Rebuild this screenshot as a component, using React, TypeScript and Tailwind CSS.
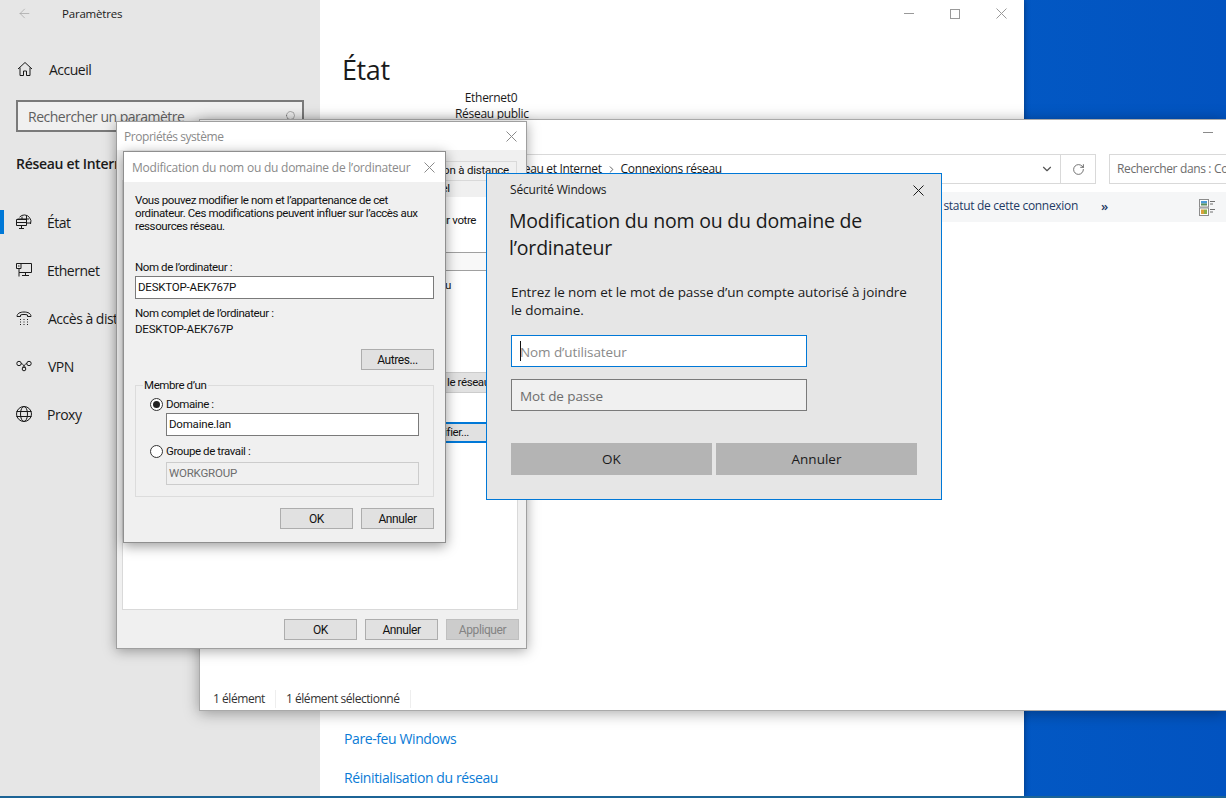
import React from "react";
import { ArrowLeft, ChevronDown, ChevronRight, RotateCw, Search } from "lucide-react";

const HomeIcon = () => (
  <svg width="16" height="16" viewBox="0 0 16 16" fill="none" stroke="#1a1a1a" strokeWidth="1">
    <path d="M1 8 8 1.5 15 8M3 6.5v8h3.5V10h3v4.5H13v-8" />
  </svg>
);

const StatusIcon = () => (
  <svg width="16" height="16" viewBox="0 0 16 16" fill="none" stroke="#1a1a1a" strokeWidth="1">
    <path d="M3.5 3.2a6.4 6.4 0 0 1 10 .3 6.4 6.4 0 0 1 1 6.5" />
    <path d="M6 5V2.6M10.5 10V1.8M13 5H1.5M15 9h-4" />
    <path d="M.5 5.5h10v6H.5zM.5 8.5h10M5.5 11.5v3M3 14.5h5" />
  </svg>
);

const EthernetIcon = () => (
  <svg width="16" height="16" viewBox="0 0 16 16" fill="none" stroke="#1a1a1a" strokeWidth="1">
    <path d="M5 1.5h10.5v9H3v-4M.5 1.5H5v5H.5zM2 4h1.5M3 10.500v4M9.5 10.5v3M6 13.5h7" />
  </svg>
);

const DialupIcon = () => (
  <svg width="16" height="16" viewBox="0 0 16 16" fill="none" stroke="#1a1a1a" strokeWidth="1">
    <path d="M1 6.5C1 3.5 4 2 8 2s7 1.5 7 4.5h-3.5V5C10 4.3 6 4.3 4.500 5v1.500z" />
    <path d="M4 9.5h1M7.500 9.500h1M11 9.5h1M4 12h1M7.500 12h1M11 12h1M4 14.500h1M7.500 14.500h1M11 14.500h1" />
  </svg>
);

const VpnIcon = () => (
  <svg width="16" height="16" viewBox="0 0 16 16" fill="none" stroke="#1a1a1a" strokeWidth="1">
    <circle cx="3" cy="5.500" r="2.200" />
    <circle cx="13" cy="5.500" r="2.200" />
    <circle cx="8" cy="11" r="1.800" />
    <path d="M5 5.500C7 6 8.500 8 9.500 9.700M11 5.500C9 6 7.500 8 6.500 9.700" />
  </svg>
);

const ProxyIcon = () => (
  <svg width="16" height="16" viewBox="0 0 16 16" fill="none" stroke="#1a1a1a" strokeWidth="1">
    <circle cx="8" cy="8" r="7.500" />
    <ellipse cx="8" cy="8" rx="3.500" ry="7.500" />
    <path d="M.5 5.500h15M.5 10.500h15" />
  </svg>
);

const ViewIcon = () => (
  <svg width="16" height="17" viewBox="0 0 16 17">
    <rect x=".5" y=".5" width="9" height="7.500" fill="#fff" stroke="#8c8c8c" />
    <rect x="2" y="2" width="6" height="2.500" fill="#4d9bd8" />
    <rect x="2" y="4.500" width="6" height="2" fill="#5a8f5c" />
    <rect x=".5" y="9" width="9" height="7.500" fill="#fff" stroke="#8c8c8c" />
    <rect x="2" y="10.500" width="3" height="4.500" fill="#d8a13c" />
    <rect x="5" y="10.500" width="3" height="4.500" fill="#8bb04a" />
    <path d="M11 2.500h5M11 5h3M11 10.500h5M11 13h3" stroke="#6f6f6f" />
  </svg>
);

const CloseIcon = ({ color = "#8a8a8a" }: { color?: string }) => (
  <svg width="11" height="11" viewBox="0 0 11 11" fill="none" stroke={color} strokeWidth="1">
    <path d="M.5.5l10 10M10.500.5l-10 10" />
  </svg>
);

const navItems = [
  { label: "État", icon: StatusIcon, gap: "pl-[15px]", active: true },
  { label: "Ethernet", icon: EthernetIcon, gap: "pl-[15px]", active: false },
  { label: "Accès à distance", icon: DialupIcon, gap: "pl-[16px]", active: false },
  { label: "VPN", icon: VpnIcon, gap: "pl-[16px]", active: false },
  { label: "Proxy", icon: ProxyIcon, gap: "pl-[15px]", active: false },
];

const Win32Button = ({ label, disabled }: { label: string; disabled?: boolean }) => (
  <button
    className={`h-[21px] w-[73px] border text-[12px] leading-none ${
      disabled ? "border-[#bfbfbf] bg-[#cccccc] text-[#838383]" : "border-[#adadad] bg-[#e1e1e1] text-[#111]"
    }`}
  >
    {label}
  </button>
);

const Field = ({ value, disabled }: { value: string; disabled?: boolean }) => (
  <div
    className={`flex h-[23px] items-center border px-[2px] tracking-[-0.2px] ${
      disabled ? "border-[#cccccc] bg-[#f0f0f0] text-[#6d6d6d]" : "border-[#7a7a7a] bg-white text-[#111]"
    }`}
  >
    {value}
  </div>
);

const Radio = ({ checked }: { checked?: boolean }) => (
  <span className="flex size-[13px] shrink-0 items-center justify-center rounded-full border border-[#333] bg-white">
    {checked && <span className="size-[7px] rounded-full bg-[#222]" />}
  </span>
);

const SettingsWindow = () => (
  <div className="absolute left-0 top-0 flex h-[796px] w-[1024px] bg-white shadow-[0_0_6px_rgba(0,0,0,0.4)]">
    <aside className="flex w-[320px] shrink-0 flex-col bg-[#e6e6e6] text-[#1a1a1a]">
      <div className="flex h-[27px] items-center pl-[17px]">
        <ArrowLeft className="size-[15px] text-[#9a9a9a]" strokeWidth={1} />
        <span className="ml-[30px] text-[11.5px] tracking-[-0.2px]">Paramètres</span>
      </div>
      <div className="mt-[30px] flex h-[24px] items-center gap-[16px] pl-[17px] text-[14px] tracking-[-0.5px]">
        <HomeIcon />
        <span>Accueil</span>
      </div>
      <div className="ml-[16px] mt-[19px] flex h-[32px] w-[288px] items-center justify-between border-2 border-[#7a7a7a] bg-[#f0f0f0] pl-[10px] pr-[6px] text-[14px] tracking-[-0.5px] text-[#5f5f5f]">
        <span>Rechercher un paramètre</span>
        <Search className="size-[12px] -scale-x-100 text-[#666]" strokeWidth={1} />
      </div>
      <div className="ml-[16px] mt-[21px] text-[14px] font-semibold tracking-[-0.3px]">Réseau et Internet</div>
      <nav className="mt-[24px] flex flex-col">
        {navItems.map((item) => {
          const Icon = item.icon;
          return (
            <div key={item.label} className="relative flex h-[48px] items-center pl-[16px] text-[14px] tracking-[-0.5px]">
              {item.active && <span className="absolute left-0 top-[12px] h-[24px] w-[4px] bg-[#0078d7]" />}
              <Icon />
              <span className={`whitespace-nowrap ${item.gap}`}>{item.label}</span>
            </div>
          );
        })}
      </nav>
    </aside>
    <main className="flex-1 text-[#1a1a1a]">
      <div className="flex h-[27px] items-center justify-end">
        <span className="flex w-[46px] justify-center"><span className="h-px w-[10px] bg-[#999]" /></span>
        <span className="flex w-[46px] justify-center"><span className="size-[10px] border border-[#999]" /></span>
        <span className="flex w-[46px] justify-center"><CloseIcon color="#999" /></span>
      </div>
      <h1 className="ml-[22px] mt-[23px] text-[27px] leading-[40px] tracking-[-0.4px]">État</h1>
      <div className="ml-[135px] w-[72px] whitespace-nowrap text-center text-[12px] leading-[16px] tracking-[-0.3px]">
        <div>Ethernet0</div>
        <div>Réseau public</div>
      </div>
      <div className="ml-[24px] mt-[607px] text-[14px] leading-[20px] tracking-[-0.4px] text-[#0a7bd6]">Pare-feu Windows</div>
      <div className="ml-[24px] mt-[19px] text-[14px] leading-[20px] tracking-[-0.4px] text-[#0a7bd6]">Réinitialisation du réseau</div>
    </main>
  </div>
);

const ExplorerWindow = () => (
  <div className="absolute left-[199px] top-[119px] flex h-[592px] w-[1027px] flex-col border-y border-l border-[#a9a9a9] bg-white text-[#1a1a1a] shadow-[0_2px_14px_rgba(0,0,0,0.35)]">
    <div className="flex h-[34px] justify-end">
      <span className="mr-[13px] mt-[12px] h-px w-[10px] bg-[#8a8a8a]" />
    </div>
    <div className="flex h-[30px] items-center text-[12px] tracking-[-0.35px]">
      <div className="flex h-full w-[896px] items-center justify-end border border-[#d9d9d9]">
        <div className="mr-auto flex items-center pl-[304px]">
          <span>Réseau et Internet</span>
          <ChevronRight className="mx-[4px] size-[11px] text-[#555]" strokeWidth={2} />
          <span>Connexions réseau</span>
        </div>
        <ChevronDown className="mr-[6px] size-[14px] text-[#555]" strokeWidth={2} />
        <div className="h-full w-px bg-[#d9d9d9]" />
        <div className="flex w-[34px] justify-center"><RotateCw className="size-[13px] text-[#555]" strokeWidth={1.5} /></div>
      </div>
      <div className="ml-[13px] flex h-full flex-1 items-center overflow-hidden border-y border-l border-[#d9d9d9] pl-[7px] text-[#6d6d6d]">
        <span className="whitespace-nowrap">Rechercher dans : Connexions réseau</span>
      </div>
    </div>
    <div className="mt-[8px] flex h-[30px] items-center justify-end bg-[#f5f6f7] pr-[11px] text-[12px] tracking-[-0.3px] text-[#1f3a64]">
      <span className="pb-[2px]">Afficher le statut de cette connexion</span>
      <span className="ml-[23px] mr-[91px] pb-[2px] text-[13px] font-semibold leading-none">»</span>
      <ViewIcon />
    </div>
    <div className="flex-1" />
    <div className="flex h-[24px] items-center pl-[13px] pt-[2px] text-[12px] tracking-[-0.45px] text-[#333]">
      <span className="border-r border-[#eeeeee] pr-[10px]">1 élément</span>
      <span className="border-r border-[#eeeeee] pl-[10px] pr-[10px]">1 élément sélectionné</span>
    </div>
  </div>
);

const PropertiesWindow = () => (
  <div className="absolute left-[116px] top-[121px] flex h-[528px] w-[411px] flex-col border border-[#9f9f9f] bg-[#f0f0f0] font-['Roboto',sans-serif] text-[11.5px] tracking-[-0.4px] text-[#111] shadow-[0_2px_12px_rgba(0,0,0,0.35)]">
    <div className="flex h-[28px] items-center justify-between bg-white pl-[7px] pr-[9px] pt-[1px] font-['Open_Sans',sans-serif] text-[12px] tracking-[-0.45px] text-[#8a8a8a]">
      <span>Propriétés système</span>
      <CloseIcon />
    </div>
    <div className="flex h-[30px] items-end justify-end pr-[9px]">
      <div className="mb-[-1px] flex h-[20px] items-center whitespace-nowrap border border-[#d9d9d9] px-[7px] tracking-[-0.2px]">
        Utilisation à distance
      </div>
    </div>
    <div className="ml-[5px] mr-[8px] flex h-[430px] flex-col border border-[#d9d9d9] bg-white">
      <div className="h-[16px] bg-[#f0f0f0] pl-[288px] leading-[14px]">Matériel</div>
      <div className="h-[55px] w-[353px] pt-[18px] text-right leading-none">pour votre</div>
      <div className="h-[19px] border-y border-[#a0a0a0] bg-[#f8f8f8]" />
      <div className="h-[101px] pl-[322px] pt-[9px] leading-none">u</div>
      <div className="ml-auto flex h-[21px] w-[120px] items-center whitespace-nowrap border-y border-[#cccccc] bg-[#e1e1e1] pl-[50px]">le réseau</div>
      <div className="h-[29px]" />
      <div className="ml-auto flex h-[21px] w-[120px] items-center justify-end border-y-2 border-[#0078d7] bg-[#e1e1e1] pr-[48px]">Modifier...</div>
    </div>
    <div className="flex flex-1 items-center justify-end gap-[8px] pr-[7px] pt-[1px]">
      <Win32Button label="OK" />
      <Win32Button label="Annuler" />
      <Win32Button label="Appliquer" disabled />
    </div>
  </div>
);

const RenameWindow = () => (
  <div className="absolute left-[123px] top-[151px] flex h-[392px] w-[323px] flex-col border border-[#8f8f8f] bg-[#f0f0f0] font-['Roboto',sans-serif] text-[11.5px] leading-[13px] tracking-[-0.4px] text-[#111] shadow-[0_3px_12px_rgba(0,0,0,0.4)]">
    <div className="flex h-[30px] shrink-0 items-center justify-between bg-white pl-[8px] pr-[10px] font-['Open_Sans',sans-serif] text-[12px] tracking-[-0.23px] text-[#8a8a8a]">
      <span>Modification du nom ou du domaine de l’ordinateur</span>
      <CloseIcon />
    </div>
    <div className="flex flex-1 flex-col px-[11px] pt-[12px]">
      <p className="whitespace-nowrap">
        Vous pouvez modifier le nom et l’appartenance de cet
        <br />
        ordinateur. Ces modifications peuvent influer sur l’accès aux
        <br />
        ressources réseau.
      </p>
      <div className="mt-[28px]">Nom de l’ordinateur :</div>
      <div className="mt-[2px]"><Field value="DESKTOP-AEK767P" /></div>
      <div className="mt-[8px]">Nom complet de l’ordinateur :</div>
      <div className="mt-[3px] tracking-[-0.2px]">DESKTOP-AEK767P</div>
      <div className="mt-[13px] flex justify-end">
        <Win32Button label="Autres..." />
      </div>
      <fieldset className="mt-[9px] h-[118px] border border-[#dcdcdc]">
        <legend className="ml-[7px] px-[1px] leading-[12px]">Membre d’un</legend>
        <div className="pl-[14px] pr-[14px] pt-[7px]">
          <div className="flex items-center gap-[3px]">
            <Radio checked />
            <span>Domaine :</span>
          </div>
          <div className="mt-[2px] pl-[16px]"><Field value="Domaine.lan" /></div>
          <div className="mt-[9px] flex items-center gap-[3px]">
            <Radio />
            <span>Groupe de travail :</span>
          </div>
          <div className="mt-[4px] pl-[16px]"><Field value="WORKGROUP" disabled /></div>
        </div>
      </fieldset>
      <div className="mt-[11px] flex justify-end gap-[8px]">
        <Win32Button label="OK" />
        <Win32Button label="Annuler" />
      </div>
    </div>
  </div>
);

const SecurityWindow = () => (
  <div className="absolute left-[486px] top-[173px] flex h-[327px] w-[456px] flex-col border border-[#0078d7] bg-[#e6e6e6] pl-[23px] pr-[17px] text-[#1a1a1a]">
    <div className="flex h-[32px] shrink-0 items-center justify-between">
      <span className="text-[12px] tracking-[-0.2px]">Sécurité Windows</span>
      <CloseIcon color="#1a1a1a" />
    </div>
    <h2 className="-ml-[1px] mt-[1px] text-[19.5px] leading-[27px] tracking-[-0.2px]">
      Modification du nom ou du domaine de
      <br />
      l’ordinateur
    </h2>
    <p className="ml-[1px] mt-[22px] text-[13.5px] leading-[18px] tracking-[-0.09px]">
      Entrez le nom et le mot de passe d’un compte autorisé à joindre
      <br />
      le domaine.
    </p>
    <div className="relative ml-[1px] mt-[16px] flex h-[32px] w-[296px] items-center border border-[#0078d7] bg-white pl-[8px] pt-[2px] text-[13.5px] tracking-[-0.1px] text-[#8a8a8a]">
      <span className="absolute left-[8px] top-[5px] h-[20px] w-px bg-[#111]" />
      Nom d’utilisateur
    </div>
    <div className="ml-[1px] mt-[12px] flex h-[32px] w-[296px] items-center border border-[#7a7a7a] bg-[#f0f0f0] pl-[8px] pt-[2px] text-[13.5px] tracking-[-0.1px] text-[#6d6d6d]">
      Mot de passe
    </div>
    <div className="ml-[1px] mt-[32px] flex gap-[4px]">
      <button className="h-[32px] w-[201px] bg-[#b4b4b4] text-[13.5px]">OK</button>
      <button className="h-[32px] w-[201px] bg-[#b4b4b4] text-[13.5px]">Annuler</button>
    </div>
  </div>
);

export default function App() {
  return (
    <div className="relative h-[798px] w-[1226px] overflow-hidden border-b-2 border-[#1c6496] bg-gradient-to-r from-[#0a6fd4] to-[#0253c0] font-['Open_Sans','Noto_Sans',sans-serif]">
      <SettingsWindow />
      <ExplorerWindow />
      <PropertiesWindow />
      <RenameWindow />
      <SecurityWindow />
    </div>
  );
}
